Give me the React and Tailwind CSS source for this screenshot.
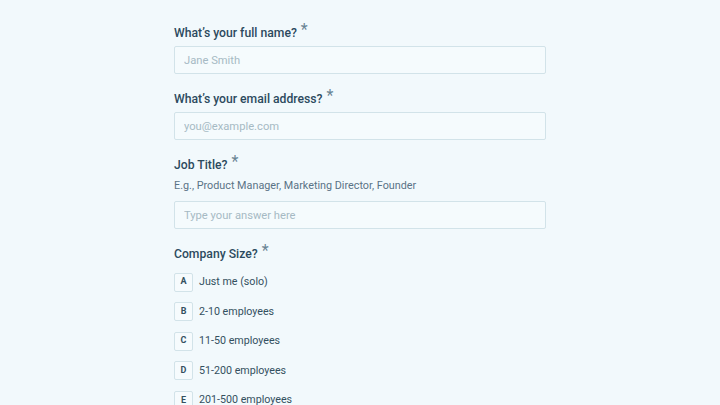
import React from 'react';

const OPTIONS = [
    { key: 'A', label: 'Just me (solo)' },
    { key: 'B', label: '2-10 employees' },
    { key: 'C', label: '11-50 employees' },
    { key: 'D', label: '51-200 employees' },
    { key: 'E', label: '201-500 employees' },
];

const Label = ({ children }) => (
    <div className="h-[20px] flex items-center text-[12.2px] font-medium text-[#2c4a5e] leading-[20px]">
        <span>{children}</span>
        <span className="ml-[4px] text-[16px] font-normal text-[#6a8494] relative top-[-3px]">*</span>
    </div>
);

const TextField = ({ placeholder }) => (
    <input
        type="text"
        placeholder={placeholder}
        className="w-full h-[28px] px-[9px] bg-[#f5fbfd] border border-[#d2e3e9] rounded-[2px] text-[11.2px] text-[#2c4a5e] placeholder:text-[#a6bac4] focus:outline-none"
    />
);

export default function App() {
    return (
        <div className="min-h-[405px] bg-[#f2f9fc] overflow-hidden" style={{ fontFamily: 'Roboto, "Noto Sans", sans-serif' }}>
            <div className="w-[372px] mx-auto pt-[23px]">
                <div className="mb-[15px]">
                    <Label>What’s your full name?</Label>
                    <div className="mt-[3px]">
                        <TextField placeholder="Jane Smith" />
                    </div>
                </div>

                <div className="mb-[15px]">
                    <Label>What’s your email address?</Label>
                    <div className="mt-[3px]">
                        <TextField placeholder="you@example.com" />
                    </div>
                </div>

                <div className="mb-[15px]">
                    <Label>Job Title?</Label>
                    <p className="mt-[3px] h-[16px] leading-[16px] text-[10.8px] text-[#5a7386]">
                        E.g., Product Manager, Marketing Director, Founder
                    </p>
                    <div className="mt-[7px]">
                        <TextField placeholder="Type your answer here" />
                    </div>
                </div>

                <div>
                    <Label>Company Size?</Label>
                    <div className="mt-[8px] flex flex-col gap-[9.6px]">
                        {OPTIONS.map((opt) => (
                            <div key={opt.key} className="flex items-center h-[20px]">
                                <span className="w-[19px] h-[19px] flex items-center justify-center border border-[#d2e3e9] rounded-[2px] bg-[#f6fbfd] text-[9px] font-bold text-[#34505f]">
                                    {opt.key}
                                </span>
                                <span className="ml-[6px] text-[10.7px] text-[#34505f]">{opt.label}</span>
                            </div>
                        ))}
                    </div>
                </div>
            </div>
        </div>
    );
}
